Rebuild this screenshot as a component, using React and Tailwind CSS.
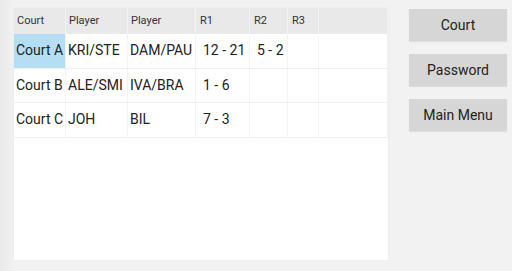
import React from "react";

const cols = ["w-[52px]", "w-[62px]", "w-[68px]", "w-[54px]", "w-[38px]", "w-[31px]", "flex-1"];
const header = ["Court", "Player", "Player", "R1", "R2", "R3", ""];
const rows = [
  ["Court A", "KRI/STE", "DAM/PAU", "12 - 21", "5 - 2", "", ""],
  ["Court B", "ALE/SMI", "IVA/BRA", "1 - 6", "", "", ""],
  ["Court C", "JOH", "BIL", "7 - 3", "", "", ""],
];

export default function App() {
  return (
    <div
      className="w-[512px] h-[271px] bg-[#f2f2f2] flex overflow-hidden"
      style={{ fontFamily: "Roboto, 'Liberation Sans', sans-serif" }}
    >
      <div className="w-[14px] h-full bg-gradient-to-r from-[#e9e9e9] to-[#f2f2f2]" />
      <div className="pt-[8px]">
        <div className="w-[374px] h-[252px] bg-white shadow-[0_0_2px_rgba(0,0,0,0.06)]">
          <div className="flex h-[26px] bg-[#e9e9e9]">
            {header.map((h, i) => (
              <div
                key={i}
                className={`${cols[i]} h-full border-r border-[#f3f3f3] flex items-center text-[11px] text-[#333] ${i >= 3 ? "pl-[4px]" : "pl-[3px]"}`}
              >
                {h}
              </div>
            ))}
          </div>
          {rows.map((r, ri) => (
            <div key={ri} className="flex h-[34.5px] border-b border-[#f0f0f0]">
              {r.map((c, ci) => (
                <div
                  key={ci}
                  className={`${cols[ci]} h-full border-r border-[#f3f3f3] flex items-center text-[14px] text-[#222] whitespace-nowrap ${ci >= 3 ? "pl-[7px]" : "pl-[2px]"} ${ri === 0 && ci === 0 ? "bg-[#b3def3]" : ""}`}
                >
                  {c}
                </div>
              ))}
            </div>
          ))}
        </div>
      </div>
      <div className="ml-[21px] pt-[9px] flex flex-col gap-[13px]">
        {["Court", "Password", "Main Menu"].map((b) => (
          <div
            key={b}
            className="w-[98px] h-[32px] bg-[#d6d6d6] flex items-center justify-center text-[14px] text-[#222] shadow-[0_1px_1px_rgba(0,0,0,0.08)]"
          >
            {b}
          </div>
        ))}
      </div>
    </div>
  );
}
